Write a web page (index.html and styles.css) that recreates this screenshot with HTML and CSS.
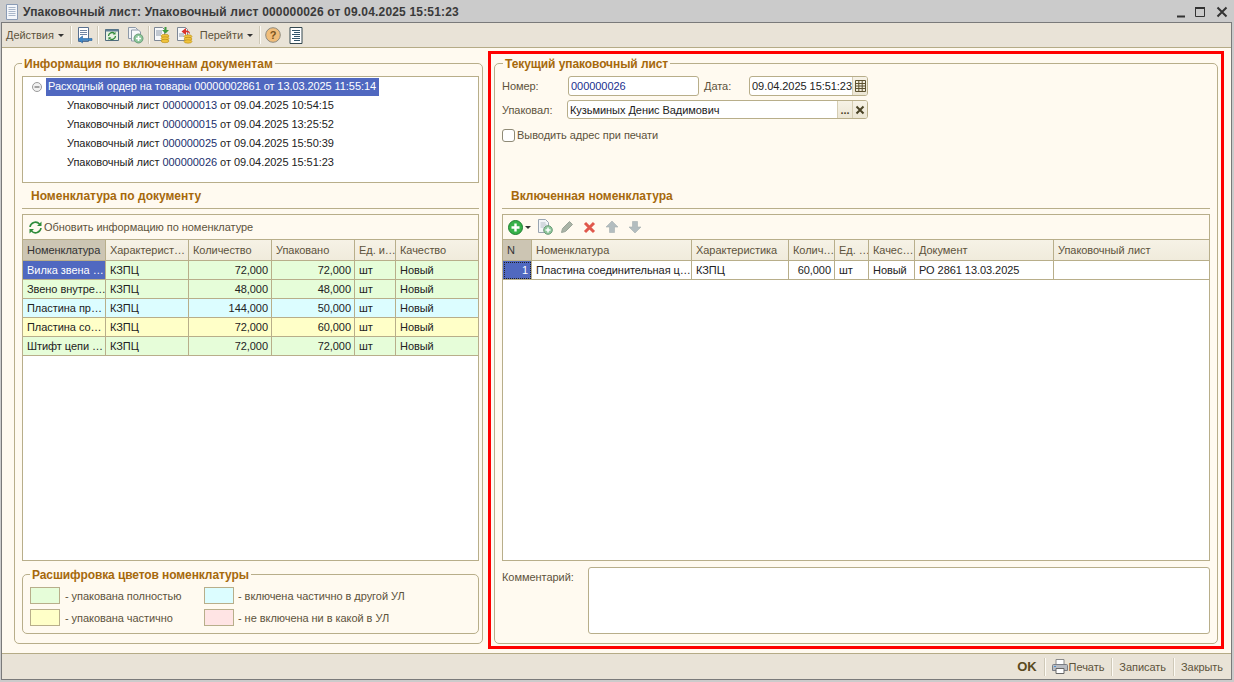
FILE: index.html
```html
<!DOCTYPE html>
<html lang="ru">
<head>
<meta charset="utf-8">
<title>Упаковочный лист</title>
<link rel="stylesheet" href="styles.css">
</head>
<body>
<div class="window">
  <header class="titlebar">
    <svg class="title-icon" width="14" height="16" viewBox="0 0 14 16"><path d="M1.500.5h11v15h-11z" fill="#f4f6fa" stroke="#8a9bb5"/><path d="M3.500 3.500h7M3.500 5.500h7M3.500 7.500h7M3.500 9.500h7M3.500 11.500h7" stroke="#a9b6c9"/></svg>
    <span class="title-text">Упаковочный лист: Упаковочный лист 000000026 от 09.04.2025 15:51:23</span>
    <div class="win-buttons">
      <svg width="10" height="12" viewBox="0 0 10 12"><path d="M1 10.500h8" stroke="#333" stroke-width="2"/></svg>
      <svg class="win-max" width="12" height="12" viewBox="0 0 12 12"><path d="M1.500 1.500h9v9h-9z" fill="none" stroke="#333"/><path d="M1 2h10" stroke="#333" stroke-width="2"/></svg>
      <svg width="12" height="12" viewBox="0 0 12 12"><path d="M1.500 1.500l9 9M10.500 1.500l-9 9" stroke="#333" stroke-width="2"/></svg>
    </div>
  </header>
  <div class="frame">
    <nav class="toolbar">
      <span class="tb-text">Действия</span><i class="caret"></i><i class="sep"></i>
      <svg class="ic ic-a" width="16" height="18" viewBox="2 0 16 18"><path d="M3.500 1.500h10v14h-10z" fill="#fff" stroke="#59708f"/><path d="M5 4.500h7M5 6.500h7M5 8.500h7" stroke="#7186a3"/><path d="M17 12.500H7.500V10L3 13.500 7.500 17v-2.500H17z" fill="#3f88c9" stroke="#2a6299" stroke-width=".6"/></svg>
      <i class="sep sep-tight"></i>
      <svg class="ic" width="16" height="16" viewBox="0 0 16 16"><path d="M1.500 2.500h13v11h-13z" fill="#e8f2e4" stroke="#4f6b7c"/><path d="M1.500 2.500h13v2h-13z" fill="#5f7f95"/><path d="M4.500 9a3.500 3.500 0 0 1 6-2.400M11.500 9a3.500 3.500 0 0 1-6 2.400" fill="none" stroke="#2f8a3a" stroke-width="1.300"/><path d="M11.500 4.800v2.700H8.800zM4.500 13v-2.700h2.700z" fill="#2f8a3a"/></svg>
      <svg class="ic ic-gap" width="17" height="17" viewBox="0 0 17 17"><path d="M1.500.5h7l2 2v9h-9z" fill="#f0f2f5" stroke="#8d99a8"/><path d="M4.500 3h7l2 2v9h-9z" fill="#f8f9fb" stroke="#8d99a8"/><circle cx="11.500" cy="11.500" r="4.500" fill="#8cc79a" stroke="#6a9a77"/><path d="M11.500 9v5M9 11.500h5" stroke="#fff" stroke-width="1.600"/></svg>
      <i class="sep sep-tight"></i>
      <svg class="ic ic-b" width="17" height="18" viewBox="0 0 17 18"><path d="M1.500 1.500h8l2 2v11h-10z" fill="#f7f8fa" stroke="#7d8795"/><path d="M3 5h6M3 7h6M3 9h5" stroke="#8d99a8"/><path d="M11.500 1v3H9l3.500 3.500L16 4h-2.500V1z" fill="#3e9a3e"/><ellipse cx="12" cy="10" rx="4" ry="1.700" fill="#f0c33c" stroke="#b58a14" stroke-width=".6"/><ellipse cx="12" cy="12.500" rx="4" ry="1.700" fill="#f0c33c" stroke="#b58a14" stroke-width=".6"/><ellipse cx="12" cy="15" rx="4" ry="1.700" fill="#f0c33c" stroke="#b58a14" stroke-width=".6"/></svg>
      <svg class="ic ic-gap2" width="17" height="18" viewBox="0 0 17 18"><path d="M1.500 1.500h8l2 2v11h-10z" fill="#f7f8fa" stroke="#7d8795"/><path d="M3 8h5M3 10h5" stroke="#8d99a8"/><path d="M10 2v2.500c3 0 4 1.500 4 3.500-1-1.300-2-1.700-4-1.700V9L5.500 5.500z" fill="#d9322a"/><ellipse cx="12" cy="10.500" rx="4" ry="1.700" fill="#f0c33c" stroke="#b58a14" stroke-width=".6"/><ellipse cx="12" cy="13" rx="4" ry="1.700" fill="#f0c33c" stroke="#b58a14" stroke-width=".6"/><ellipse cx="12" cy="15.500" rx="4" ry="1.700" fill="#f0c33c" stroke="#b58a14" stroke-width=".6"/></svg>
      <span class="tb-text tb-goto">Перейти</span><i class="caret"></i><i class="sep"></i>
      <svg class="ic ic-c" width="16" height="16" viewBox="0 0 16 16"><circle cx="8" cy="8" r="7.300" fill="#f0bd7a" stroke="#8f8a7e"/><text class="help-q" x="8" y="12" text-anchor="middle">?</text></svg>
      <svg class="ic ic-gap3" width="14" height="17" viewBox="0 0 14 17"><path d="M1 .5h12v16H1z" fill="#fff" stroke="#33474f"/><path d="M3 3.500h8M5 5.500h6M3 7.500h8M5 9.500h6M3 11.500h8M5 13.500h6" stroke="#33556a"/></svg>
    </nav>
    <main class="content">
      <section class="left">
        <div class="group left-group">
          <div class="group-title title-info">Информация по включеннам документам</div>
          <div class="box tree">
            <div class="tree-row tree-parent">
              <svg class="tree-toggle" width="10" height="10" viewBox="0 0 10 10"><circle cx="5" cy="5" r="4.500" fill="#f2f2f2" stroke="#9a9a9a"/><path d="M2.500 5h5" stroke="#555"/></svg>
              <span class="tree-sel">Расходный ордер на товары 00000002861 от 13.03.2025 11:55:14</span>
            </div>
            <div class="tree-row tree-child">Упаковочный лист <b>000000013</b> от 09.04.2025 10:54:15</div>
            <div class="tree-row tree-child">Упаковочный лист <b>000000015</b> от 09.04.2025 13:25:52</div>
            <div class="tree-row tree-child">Упаковочный лист <b>000000025</b> от 09.04.2025 15:50:39</div>
            <div class="tree-row tree-child">Упаковочный лист <b>000000026</b> от 09.04.2025 15:51:23</div>
          </div>
          <div class="section-label">Номенклатура по документу</div>
          <div class="box table-box">
            <div class="table-tools tools-left">
              <svg width="15" height="15" viewBox="0 0 15 15"><path d="M2 7a5.500 5.500 0 0 1 9.500-3M13 8a5.500 5.500 0 0 1-9.500 3" fill="none" stroke="#2e8b3a" stroke-width="1.600"/><path d="M13.500 1.500v4.500H9zM1.500 13.500V9H6z" fill="#2e8b3a"/></svg>
              <span class="tools-text">Обновить информацию по номенклатуре</span>
            </div>
            <table class="grid">
              <colgroup><col class="w83"><col class="w83"><col class="w83"><col class="w83"><col class="w41"><col class="w82"></colgroup>
              <thead><tr><th class="th-active">Номенклатура</th><th>Характерист…</th><th>Количество</th><th>Упаковано</th><th>Ед. и…</th><th>Качество</th></tr></thead>
              <tbody>
                <tr class="c-green"><td class="td-active">Вилка звена …</td><td>КЗПЦ</td><td class="num">72,000</td><td class="num">72,000</td><td>шт</td><td>Новый</td></tr>
                <tr class="c-green"><td>Звено внутре…</td><td>КЗПЦ</td><td class="num">48,000</td><td class="num">48,000</td><td>шт</td><td>Новый</td></tr>
                <tr class="c-blue"><td>Пластина пр…</td><td>КЗПЦ</td><td class="num">144,000</td><td class="num">50,000</td><td>шт</td><td>Новый</td></tr>
                <tr class="c-yellow"><td>Пластина со…</td><td>КЗПЦ</td><td class="num">72,000</td><td class="num">60,000</td><td>шт</td><td>Новый</td></tr>
                <tr class="c-green"><td>Штифт цепи …</td><td>КЗПЦ</td><td class="num">72,000</td><td class="num">72,000</td><td>шт</td><td>Новый</td></tr>
              </tbody>
            </table>
          </div>
          <div class="group legend-group">
            <div class="group-title title-legend">Расшифровка цветов номенклатуры</div>
            <div class="legend-grid">
              <div class="legend-item"><i class="swatch s-green"></i>- упакована полностью</div>
              <div class="legend-item"><i class="swatch s-blue"></i>- включена частично в другой УЛ</div>
              <div class="legend-item"><i class="swatch s-yellow"></i>- упакована частично</div>
              <div class="legend-item"><i class="swatch s-pink"></i>- не включена ни в какой в УЛ</div>
            </div>
          </div>
        </div>
      </section>
      <section class="right">
        <div class="group right-group">
          <div class="group-title title-current">Текущий упаковочный лист</div>
          <div class="form-row row-one">
            <label class="lbl lbl-num">Номер:</label>
            <div class="field f-num">000000026</div>
            <label class="lbl lbl-date">Дата:</label>
            <div class="field f-date"><span class="field-val">09.04.2025 15:51:23</span>
              <span class="field-btn"><svg width="11" height="12" viewBox="0 0 11 12"><path d="M.5.500h10v11H.5zM.5 3.500h10M.5 6h10M.5 8.500h10M3.800 .5v11M7.200 .5v11" fill="none" stroke="#5d5230"/></svg></span>
            </div>
          </div>
          <div class="form-row row-two">
            <label class="lbl lbl-pack">Упаковал:</label>
            <div class="field f-pack"><span class="field-val">Кузьминых Денис Вадимович</span>
              <span class="field-btn btn-dots">...</span>
              <span class="field-btn"><svg width="10" height="10" viewBox="0 0 10 10"><path d="M1.500 1.500l7 7M8.500 1.500l-7 7" stroke="#4a4326" stroke-width="2"/></svg></span>
            </div>
          </div>
          <div class="form-row row-check">
            <i class="check"></i><span class="lbl check-lbl">Выводить адрес при печати</span>
          </div>
          <div class="section-label section-right">Включенная номенклатура</div>
          <div class="box table-box">
            <div class="table-tools tools-right">
              <svg width="15" height="15" viewBox="0 0 15 15"><circle cx="7.500" cy="7.500" r="7" fill="#37b24a" stroke="#1f7f30"/><path d="M7.500 3.500v8M3.500 7.500h8" stroke="#fff" stroke-width="2.400"/></svg>
              <i class="caret caret-small"></i>
              <svg class="t-doc" width="16" height="16" viewBox="0 0 16 16"><path d="M1.500.5h7l3 3v10h-10z" fill="#f4f6f8" stroke="#9aa5b1"/><path d="M3.500 4h5M3.500 6h6M3.500 8h4" stroke="#b3bcc6"/><circle cx="11" cy="11" r="4.300" fill="#8fc79c" stroke="#6a9a77"/><path d="M11 8.500v5M8.500 11h5" stroke="#fff" stroke-width="1.500"/></svg>
              <svg class="t-pen" width="14" height="14" viewBox="0 0 14 14"><path d="M1.500 12.500l1-4L9.500 1.500l3 3-7 7z" fill="#a9b3a6" stroke="#9aa498"/></svg>
              <svg class="t-del" width="13" height="13" viewBox="0 0 13 13"><path d="M2 2l9 9M11 2l-9 9" stroke="#e0584c" stroke-width="3"/></svg>
              <svg class="t-up" width="14" height="14" viewBox="0 0 14 14"><path d="M7 1l6 6H9.500v5.500h-5V7H1z" fill="#b3bdbf" stroke="#a4aeb0" stroke-width=".6"/></svg>
              <svg class="t-down" width="14" height="14" viewBox="0 0 14 14"><path d="M7 13L1 7h3.500V1.500h5V7H13z" fill="#b3bdbf" stroke="#a4aeb0" stroke-width=".6"/></svg>
            </div>
            <table class="grid">
              <colgroup><col class="w29"><col class="w160"><col class="w97"><col class="w46"><col class="w34"><col class="w46"><col class="w139"><col class="w155"></colgroup>
              <thead><tr><th class="th-active">N</th><th>Номенклатура</th><th>Характеристика</th><th>Колич…</th><th>Ед. …</th><th>Качес…</th><th>Документ</th><th>Упаковочный лист</th></tr></thead>
              <tbody>
                <tr class="c-white"><td class="num td-active td-dotted">1</td><td>Пластина соединительная ц…</td><td>КЗПЦ</td><td class="num">60,000</td><td>шт</td><td>Новый</td><td>РО 2861 13.03.2025</td><td></td></tr>
              </tbody>
            </table>
          </div>
          <div class="comment-row">
            <span class="lbl lbl-comment">Комментарий:</span>
            <div class="comment-area"></div>
          </div>
        </div>
      </section>
    </main>
    <footer class="footer">
      <span class="ft-ok">OK</span><i class="sep"></i>
      <svg class="ft-print" width="16" height="15" viewBox="0 0 16 15"><path d="M4 .5h8v5H4z" fill="#fff" stroke="#8a8a8a"/><path d="M1.500 5.500h13a1 1 0 0 1 1 1v5h-15v-5a1 1 0 0 1 1-1z" fill="#b9bcc2" stroke="#7a7d84"/><path d="M4 9.500h8v5H4z" fill="#fff" stroke="#666"/><path d="M2 7.500h2" stroke="#4a90d0"/></svg>
      <span class="ft-text">Печать</span><i class="sep"></i>
      <span class="ft-text">Записать</span><i class="sep"></i>
      <span class="ft-text">Закрыть</span>
    </footer>
  </div>
</div>
</body>
</html>
```
FILE: styles.css
```css
* { box-sizing: border-box; }
html, body { margin: 0; padding: 0; }
body { width: 1234px; height: 682px; overflow: hidden; background: #fff; font: 11px/14px "Liberation Sans", Arial, sans-serif; letter-spacing: -.05px; color: #222; }
i { display: block; font-style: normal; }
svg { display: block; flex: none; }

.window { height: 682px; display: flex; flex-direction: column; background: #cbcbcb; padding: 1px 2px 2px 1px; }
.titlebar { height: 21px; display: flex; align-items: center; padding-left: 4px; flex: none; }
.title-text { font-weight: bold; font-size: 12px; letter-spacing: .18px; color: #3a3a3a; margin-left: 4px; }
.win-buttons { margin-left: auto; display: flex; align-items: center; gap: 8px; padding-right: 4px; }
.win-max { margin-right: 2px; }

.frame { flex: 1; display: flex; flex-direction: column; border: 1px solid #7a7a7a; background: #fffaf0; min-height: 0; }
.toolbar { height: 25px; flex: none; background: #e9e3d7; border-bottom: 1px solid #b5ab86; display: flex; align-items: center; padding-left: 4px; color: #5a5038; }
.tb-text { color: #5d533c; }
.tb-goto { margin-left: 7px; }
.caret { width: 0; height: 0; border: 3px solid transparent; border-top: 3px solid #333; border-bottom: 0; margin-left: 4px; }
.sep { width: 2px; height: 18px; background: linear-gradient(90deg, #cfc9b8 50%, #fdfbf5 50%); margin: 0 5px 0 6px; }
.sep-tight { margin-left: 4px; }
.ic-gap { margin-left: 7px; }
.ic-b { margin-left: -2px; }
.ic-c { margin-left: -1px; }
.ic-gap2 { margin-left: 6px; }
.ic-gap3 { margin-left: 8px; }
.help-q { font: bold 11px "Liberation Sans", sans-serif; fill: #7a5420; }

.content { flex: 1; display: flex; min-height: 0; padding-left: 12px; }
.left { width: 469px; padding-top: 15px; }
.left-group { height: 581px; padding: 0 3px 0 7px; }
.right { width: 736px; height: 598px; margin: 3px 0 0 5px; border: 3px solid #f00; padding: 9px 0 0 3px; }
.right-group { width: 724px; height: 581px; padding: 0 7px 0 7px; }

.group { border: 1px solid #b8ae8a; border-radius: 5px; display: flex; flex-direction: column; }
.group-title { height: 16px; font-size: 12px; line-height: 16px; margin: -8px 0 0 0; width: fit-content; background: #fffaf0; padding: 0 2px; font-weight: bold; color: #a6690c; letter-spacing: 0; }
.title-info { margin-left: 0; }
.title-current { margin-left: 1px; letter-spacing: -.08px; }
.title-legend { margin-left: 0; letter-spacing: -.1px; }

.box { border: 1px solid #b8ae8a; background: #fff; }
.tree { height: 107px; margin-top: 4px; flex: none; }
.tree-row { height: 19px; line-height: 19px; white-space: nowrap; }
.tree-parent { display: flex; align-items: center; padding-left: 9px; }
.tree-sel { background: #5068c0; color: #fff; height: 18px; line-height: 17px; padding: 0 3px 0 2px; margin-left: 4px; letter-spacing: -.08px; }
.tree-child { padding-left: 44px; }
.tree-child b { font-weight: normal; color: #1a2f6e; }

.section-label { height: 26px; flex: none; border-bottom: 1px solid #b8ae8a; padding: 5px 0 0 9px; font-size: 12px; font-weight: bold; color: #a6690c; line-height: 16px; letter-spacing: 0; }
.table-box { margin-top: 5px; height: 347px; flex: none; overflow: hidden; }
.table-tools { height: 25px; background: #fffaf0; border-bottom: 1px solid #b8ae8a; display: flex; align-items: center; }
.tools-left { padding-left: 5px; color: #5d533c; }
.tools-text { margin-left: 1px; }
.tools-right { padding-left: 5px; }
.caret-small { margin-left: 2px; }
.t-doc { margin-left: 6px; }
.t-pen { margin-left: 7px; }
.t-del { margin-left: 9px; }
.t-up { margin-left: 9px; }
.t-down { margin-left: 9px; }

.grid { width: 100%; border-collapse: separate; border-spacing: 0; table-layout: fixed; }
.grid th { height: 21px; background: linear-gradient(#f6f2e6, #f0ebdc); color: #5d533c; font-weight: normal; text-align: left; padding: 0 3px 0 4px; border-right: 1px solid #b8ae8a; border-bottom: 1px solid #b8ae8a; white-space: nowrap; overflow: hidden; }
.grid th:last-child, .grid td:last-child { border-right: 0; }
.grid .th-active { background: #ccc5b3; color: #333; }
.grid td { height: 19px; padding: 0 3px 0 4px; border-right: 1px solid #b8ae8a; border-bottom: 1px solid #b8ae8a; white-space: nowrap; overflow: hidden; color: #222; }
.grid .num { text-align: right; }
.grid .td-active { background: #5068c0; color: #fff; }
.grid .td-dotted { outline: 1px dotted #222; outline-offset: -2px; }
.w29 { width: 29px; } .w34 { width: 34px; } .w41 { width: 41px; } .w46 { width: 46px; }
.w82 { width: 82px; } .w83 { width: 83px; } .w97 { width: 97px; } .w139 { width: 139px; }
.w155 { width: 155px; } .w160 { width: 160px; }
.c-green td { background: #e6fdd9; }
.c-blue td { background: #dcfdff; }
.c-yellow td { background: #ffffc8; }
.c-white td { background: #fff; }
.c-green .td-active { background: #5068c0; }

.legend-group { width: 457px; height: 60px; margin-top: 13px; flex: none; padding: 0 0 0 7px; }
.legend-grid { display: grid; grid-template-columns: 174px 1fr; row-gap: 5px; margin-top: 4px; }
.legend-item { display: flex; align-items: center; height: 17px; color: #5d533c; }
.swatch { width: 30px; height: 17px; border: 1px solid #b8ae8a; margin-right: 5px; flex: none; }
.s-green { background: #e6fdd9; }
.s-blue { background: #dcfdff; margin-right: 4px; }
.s-yellow { background: #ffffc8; }
.s-pink { background: #ffe4e4; margin-right: 4px; }

.form-row { display: flex; align-items: center; flex: none; }
.lbl { color: #5d533c; }
.row-one { height: 20px; margin-top: 4px; }
.row-two { height: 19px; margin-top: 4px; }
.row-check { height: 13px; margin-top: 10px; }
.lbl-num { width: 66px; }
.lbl-date { width: 45px; margin-left: 5px; }
.lbl-pack { width: 65px; }
.field { height: 100%; border: 1px solid #b8ae8a; border-radius: 3px; background: #fff; display: flex; align-items: center; padding-left: 2px; overflow: hidden; }
.f-num { width: 131px; color: #1a2f8e; }
.f-date { width: 119px; padding-right: 0; }
.f-pack { width: 301px; }
.field-val { flex: 1; white-space: nowrap; }
.field-btn { width: 15px; height: 100%; flex: none; background: linear-gradient(#f6f2e6, #ece6d4); border-left: 1px solid #d5cdb3; display: flex; align-items: center; justify-content: center; }
.btn-dots { color: #4a4326; font-weight: bold; line-height: 10px; }
.check { width: 13px; height: 13px; border: 1px solid #8f8a76; border-radius: 3px; background: #fff; margin-right: 2px; }
.check-lbl { margin-bottom: 2px; }

.section-right { height: 67px; padding-top: 46px; }
.comment-row { display: flex; margin-top: 6px; }
.lbl-comment { width: 86px; padding-top: 3px; }
.comment-area { width: 622px; height: 67px; border: 1px solid #b8ae8a; border-radius: 3px; background: #fff; }

.footer { height: 26px; margin-top: auto; flex: none; background: #e9e3d7; border-top: 1px solid #b5ab86; display: flex; align-items: center; justify-content: flex-end; padding-right: 8px; }
.footer .sep { margin: 0 6px 0 7px; }
.ft-ok { font-weight: bold; font-size: 13px; color: #5a4a20; }
.ft-text { color: #5d533c; }
.ft-print { margin-right: 1px; }
```
